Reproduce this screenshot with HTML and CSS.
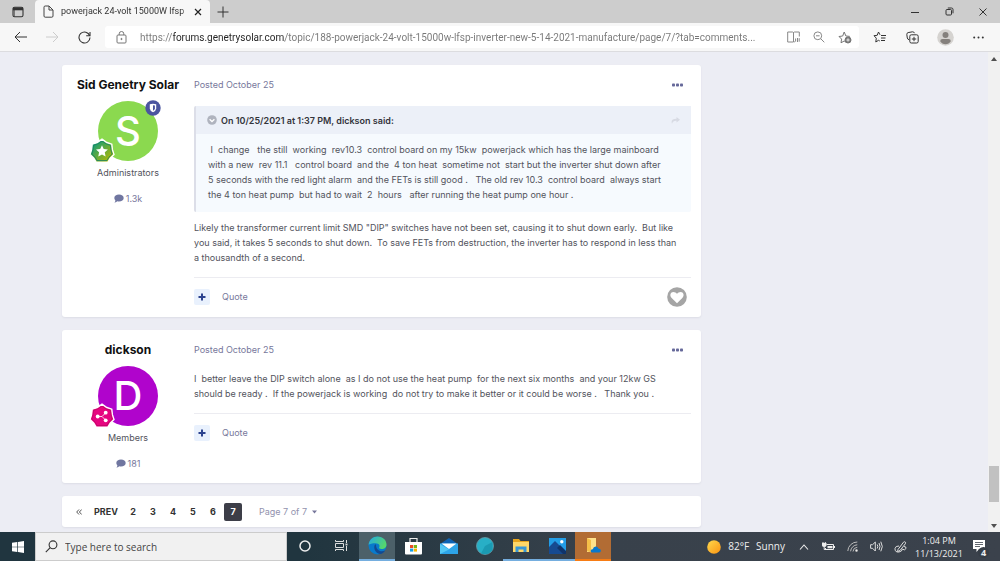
FILE: index.html
```html
<!DOCTYPE html>
<html lang="en">
<head>
<meta charset="utf-8">
<meta name="viewport" content="width=device-width, initial-scale=1">
<title>powerjack 24-volt 15000W lfsp inverter</title>
<link rel="stylesheet" href="styles.css">
</head>
<body>
<header class="browser">
  <div class="tabs">
    <button class="tab-menu" aria-label="Tab actions"><svg width="12" height="12" viewBox="0 0 12 12"><rect x="1" y="1.2" width="10" height="9.6" rx="1.6" fill="none" stroke="#333" stroke-width="1.1"/><path d="M1 1.5h10v2.8H1z" fill="#333"/><path d="M2.3 4v6.5" stroke="#333" stroke-width=".7"/></svg></button>
    <div class="tab">
      <svg width="11" height="13" viewBox="0 0 11 13" fill="none" stroke="#444" stroke-width="1"><path d="M1 2.2Q1 1 2.2 1H6l4 4v6q0 1.200-1.200 1.200H2.200Q1 12.200 1 11z"/><path d="M6 1v4h4"/></svg>
      <span class="tab-title">powerjack 24-volt 15000W lfsp i</span>
      <button aria-label="Close tab"><svg width="8" height="8" viewBox="0 0 8 8" stroke="#222" stroke-width="1.2"><path d="M1 1l6 6M7 1L1 7"/></svg></button>
    </div>
    <button class="new-tab" aria-label="New tab"><svg width="12" height="12" viewBox="0 0 12 12" stroke="#333"><path d="M6 .5v11M.5 6h11"/></svg></button>
    <div class="window-controls">
      <button aria-label="Minimize"><svg width="8" height="8" viewBox="0 0 8 8" stroke="#333"><path d="M0 4.500h8"/></svg></button>
      <button aria-label="Restore"><svg width="9" height="9" viewBox="0 0 9 9" fill="none" stroke="#333"><rect x="1" y="2.500" width="5.500" height="5.500" rx="1"/><path d="M2.800 1h3.700Q8 1 8 2.500v3.800"/></svg></button>
      <button aria-label="Close"><svg width="8" height="8" viewBox="0 0 8 8" stroke="#333"><path d="M.5.5l7 7M7.500.5l-7 7"/></svg></button>
    </div>
  </div>
  <div class="toolbar">
    <div class="nav">
      <button aria-label="Back"><svg width="13" height="12" viewBox="0 0 13 12" fill="none" stroke="#333"><path d="M6 1L1 6l5 5M1 6h12"/></svg></button>
      <button aria-label="Forward"><svg width="13" height="12" viewBox="0 0 13 12" fill="none" stroke="#ccc"><path d="M7 1l5 5-5 5M12 6H0"/></svg></button>
      <button aria-label="Refresh"><svg width="13" height="13" viewBox="0 0 13 13" fill="none" stroke="#333" stroke-width="1.1"><path d="M11.700 4.700A5.500 5.500 0 1 0 12 6.500"/><path d="M12 1v3.800H8.200"/></svg></button>
    </div>
    <div class="address">
      <svg width="11" height="13" viewBox="0 0 11 13" fill="none" stroke="#777"><rect x="1" y="4" width="9" height="8" rx="1"/><path d="M3.200 4V2.800a2.300 2.300 0 0 1 4.600 0V4"/><circle cx="5.500" cy="8" r=".6" fill="#777"/></svg>
      <input class="url" type="text" aria-label="Address" value="https://forums.genetrysolar.com/topic/188-powerjack-24-volt-15000w-lfsp-inverter-new-5-14-2021-manufacture/page/7/?tab=comments...">
      <button aria-label="Immersive reader"><svg width="13" height="12" viewBox="0 0 13 12" fill="none" stroke="#888"><path d="M6.500 11V1.200M6.500 11H.7V1h4.800l1 .7 1-.7h4.800v4.500M7.200 11l1-.5"/><path d="M8.600 7.500v3M10.500 7v4M12.200 7.200v3.500"/></svg></button>
      <button aria-label="Zoom"><svg width="12" height="12" viewBox="0 0 12 12" fill="none" stroke="#888"><circle cx="4.800" cy="4.800" r="3.900"/><path d="M3 4.800h3.600M7.700 7.700l3.600 3.600"/></svg></button>
      <button aria-label="Add to favorites"><svg width="14" height="13" viewBox="0 0 14 13" fill="none" stroke="#777"><path d="M7.500 11L6.200 10 3 11.800l.6-3.700L1 5.500l3.700-.5L6.200 1l1.700 4 3.900.4"/><circle cx="10" cy="9" r="3" fill="#777"/><path d="M8.300 9h3.400M10 7.300v3.400" stroke="#fff" stroke-width=".8"/></svg></button>
    </div>
    <div class="tools">
      <button aria-label="Favorites"><svg width="13" height="12" viewBox="0 0 13 12" fill="none" stroke="#333"><path d="M7 3.800L5.500 1 4.200 4.300 1 4.700l2.300 2.500L2.800 11 5.500 9.300l1.300.7M8 4.500h5M8 7h4.500M8 9.500h4"/></svg></button>
      <button aria-label="Collections"><svg width="13" height="13" viewBox="0 0 13 13" fill="none" stroke="#333"><path d="M3 8.700Q1.700 8.500 1.300 7L.8 3.500Q.7 2 2.100 1.600L6.500.8Q8 .7 8.500 2.200"/><rect x="3.800" y="3.800" width="8.400" height="8.200" rx="1.500"/><path d="M5.800 8h4.400M8 5.800v4.400"/></svg></button>
      <button aria-label="Profile"><svg width="17" height="17" viewBox="0 0 17 17"><circle cx="8.500" cy="8.500" r="8.300" fill="#d5d3d0"/><circle cx="8.500" cy="6" r="3" fill="#85817d"/><path d="M3.200 12.300Q3.200 10 5.500 10h6q2.300 0 2.300 2.300-1.900 3-5.300 3t-5.300-3z" fill="#85817d"/></svg></button>
      <button aria-label="Settings and more"><svg width="11" height="3" viewBox="0 0 11 3" fill="#333"><circle cx="1.200" cy="1.500" r="1"/><circle cx="5.500" cy="1.500" r="1"/><circle cx="9.800" cy="1.500" r="1"/></svg></button>
    </div>
  </div>
</header>

<div class="viewport">
  <main class="thread">
    <article class="card post">
      <aside class="author">
        <h3 class="name">Sid Genetry Solar</h3>
        <div class="avatar avatar-green">S
          <svg class="shield" width="16" height="16" viewBox="0 0 16 16"><circle cx="8" cy="8" r="7.700" fill="#4b559f"/><path d="M4.800 4.200L8 3.800l3.200.4v4.300Q11 11 8 12.200 5 11 4.800 8.500z" fill="#fff"/><path d="M8 5.200l1.900.2v3q-.1 1.500-1.900 2.300z" fill="#4b559f"/></svg>
          <svg class="rank" width="26" height="26" viewBox="0 0 26 26"><defs><linearGradient id="rank-a" x1="0" y1="0" x2="1" y2="1"><stop offset=".1" stop-color="#079b80"/><stop offset=".9" stop-color="#b6b900"/></linearGradient></defs><path d="M13 1.200l4.800 3.300 5 1.700.6 5.500 1.600 4.800-3.800 3.700-2.300 4-5.900.1-5.900-.1-2.300-4L1 16.500l1.600-4.800.6-5.500 5-1.700z" fill="url(#rank-a)" stroke="#fff" stroke-width="1.400"/><path d="M13 3.200l4.200 2.700 4.200 1.400.5 4.700 1.200 4-3.200 3.200-1.900 3.300-5 .1-5-.1-1.900-3.300L2.900 16l1.200-4 .5-4.700 4.200-1.400z" fill="none" stroke="#168164" stroke-width=".8"/><path d="M13 7.200l1.700 3.800 4.200.5-3.100 2.800.8 4.200-3.600-2.100-3.700 2.100.8-4.200L7 11.500l4.200-.5z" fill="#fff"/></svg>
        </div>
        <div class="group">Administrators</div>
        <div class="count"><svg width="10" height="9" viewBox="0 0 10 9"><path d="M5 .5c2.700 0 4.700 1.500 4.700 3.500S7.700 7.500 5 7.500q-.9 0-1.700-.2Q2 8.500.3 8.500 1.300 7.600 1.400 6.400.3 5.400.3 4C.3 2 2.300.5 5 .5z" fill="#7076a0"/></svg>1.3k</div>
      </aside>
      <section class="content">
        <div class="meta"><a href="#">Posted October 25</a><button aria-label="More options"><svg width="11" height="4" viewBox="0 0 11 4" fill="#66699a"><rect y=".5" width="3" height="3" rx=".8"/><rect x="4" y=".5" width="3" height="3" rx=".8"/><rect x="8" y=".5" width="3" height="3" rx=".8"/></svg></button></div>
        <blockquote class="quote">
          <div class="cite"><svg width="10" height="10" viewBox="0 0 10 10"><circle cx="5" cy="5" r="4.800" fill="#afb3be"/><path d="M2.600 4.200L5 6.500l2.400-2.300" fill="none" stroke="#fff" stroke-width="1.300"/></svg><span>On 10/25/2021 at 1:37 PM, dickson said:</span><svg width="9" height="7" viewBox="0 0 9 7"><path d="M5.500 0L9 2.800 5.500 5.600V3.800Q2 3.500 1 6.800-.8 1.900 5.500 1.800z" fill="#d7dae3"/></svg></div>
          <p class="text"> I  change   the still  working  rev10.3  control board on my 15kw  powerjack which has the large mainboard
with a new  rev 11.1   control board  and the  4 ton heat  sometime not  start but the inverter shut down after
5 seconds with the red light alarm  and the FETs is still good .   The old rev 10.3  control board  always start
the 4 ton heat pump  but had to wait  2  hours   after running the heat pump one hour .</p>
        </blockquote>
        <p class="text">Likely the transformer current limit SMD "DIP" switches have not been set, causing it to shut down early.  But like
you said, it takes 5 seconds to shut down.  To save FETs from destruction, the inverter has to respond in less than
a thousandth of a second.</p>
        <footer class="actions"><button class="multi" aria-label="Multiquote"><svg width="8" height="8" viewBox="0 0 8 8" stroke="#2c438f" stroke-width="2"><path d="M4 .5v7M.5 4h7"/></svg></button><button class="reply">Quote</button><button class="like" aria-label="Like"><svg width="20" height="20" viewBox="0 0 20 20"><circle cx="10" cy="10" r="9.800" fill="#a5a5a5"/><path d="M10 16.300L4.700 11C2.200 8.300 3.600 5 6.300 5Q8.800 5 10 6.800 11.200 5 13.700 5c2.700 0 4.100 3.300 1.600 6z" fill="#fff"/></svg></button></footer>
      </section>
    </article>

    <article class="card post">
      <aside class="author">
        <h3 class="name">dickson</h3>
        <div class="avatar avatar-purple">D
          <svg class="rank" width="26" height="26" viewBox="0 0 26 26"><path d="M13 1.200l4.800 3.300 5 1.700.6 5.500 1.600 4.800-3.800 3.700-2.300 4-5.900.1-5.900-.1-2.300-4L1 16.500l1.600-4.800.6-5.500 5-1.700z" fill="#e60580" stroke="#fff" stroke-width="1.400"/><path d="M13 3.200l4.200 2.700 4.200 1.400.5 4.700 1.200 4-3.200 3.200-1.900 3.300-5 .1-5-.1-1.900-3.300L2.900 16l1.200-4 .5-4.700 4.200-1.400z" fill="none" stroke="#bd0764" stroke-width=".8"/><path d="M9 13.500h4l3.500-3.500M13 13.500l3.500 3.500" fill="none" stroke="#fff" stroke-width=".8"/><g fill="#fff"><circle cx="8.700" cy="13.500" r="1.900"/><circle cx="16.700" cy="9.700" r="1.900"/><circle cx="16.700" cy="17.300" r="1.900"/></g></svg>
        </div>
        <div class="group">Members</div>
        <div class="count"><svg width="10" height="9" viewBox="0 0 10 9"><path d="M5 .5c2.700 0 4.700 1.500 4.700 3.500S7.700 7.500 5 7.500q-.9 0-1.700-.2Q2 8.500.3 8.500 1.300 7.600 1.400 6.400.3 5.400.3 4C.3 2 2.300.5 5 .5z" fill="#7076a0"/></svg>181</div>
      </aside>
      <section class="content">
        <div class="meta"><a href="#">Posted October 25</a><button aria-label="More options"><svg width="11" height="4" viewBox="0 0 11 4" fill="#66699a"><rect y=".5" width="3" height="3" rx=".8"/><rect x="4" y=".5" width="3" height="3" rx=".8"/><rect x="8" y=".5" width="3" height="3" rx=".8"/></svg></button></div>
        <p class="text">I  better leave the DIP switch alone  as I do not use the heat pump  for the next six months  and your 12kw GS
should be ready .  If the powerjack is working  do not try to make it better or it could be worse .   Thank you .</p>
        <footer class="actions"><button class="multi" aria-label="Multiquote"><svg width="8" height="8" viewBox="0 0 8 8" stroke="#2c438f" stroke-width="2"><path d="M4 .5v7M.5 4h7"/></svg></button><button class="reply">Quote</button></footer>
      </section>
    </article>

    <nav class="card pages" aria-label="Pagination">
      <a href="#" aria-label="First page"><svg width="6" height="6" viewBox="0 0 6 6" fill="none" stroke="#555"><path d="M3 .5L.7 3 3 5.500M5.700.5L3.400 3l2.300 2.500"/></svg></a>
      <a class="prev" href="#">PREV</a>
      <a href="#">2</a><a href="#">3</a><a href="#">4</a><a href="#">5</a><a href="#">6</a><a class="current" href="#" aria-current="page">7</a>
      <button class="jump">Page 7 of 7<svg width="5" height="4" viewBox="0 0 5 4"><path d="M0 .5h5L2.500 3.500z" fill="#77779b"/></svg></button>
    </nav>
  </main>
  <div class="scrollbar" aria-hidden="true">
    <svg width="6" height="4" viewBox="0 0 6 4"><path d="M0 4l3-4 3 4z" fill="#505050"/></svg>
    <span class="thumb"></span>
    <svg width="6" height="4" viewBox="0 0 6 4"><path d="M0 0l3 4 3-4z" fill="#505050"/></svg>
  </div>
</div>

<footer class="taskbar">
  <button class="start" aria-label="Start"><svg width="12" height="12" viewBox="0 0 12 12" fill="#fff"><path d="M0 1.800L5.300 1v4.700H0zM6 .9L12 0v5.700H6zM0 6.300h5.300V11L0 10.200zM6 6.300h6V12l-6-.9z"/></svg></button>
  <label class="search"><svg width="13" height="13" viewBox="0 0 13 13" fill="none" stroke="#333" stroke-width="1.100"><circle cx="8" cy="4.800" r="3.900"/><path d="M5.200 7.700L.8 12.200"/></svg><input type="text" aria-label="Search" placeholder="Type here to search"></label>
  <div class="apps">
    <button aria-label="Cortana"><svg width="14" height="14" viewBox="0 0 14 14"><circle cx="7" cy="7" r="5" fill="none" stroke="#eee" stroke-width="1.500"/></svg></button>
    <button aria-label="Task view"><svg width="13" height="13" viewBox="0 0 13 13" fill="none" stroke="#ddd"><path d="M.5 1v1.500h8V1M.5 12v-1.500h8V12M.5 4.500h8v4h-8zM11.500 1v3M11.500 7v5"/><path d="M10.500 5.500h2" stroke-width="1.800"/></svg></button>
    <button class="active" aria-label="Edge"><svg width="19" height="19" viewBox="0 0 19 19"><defs><linearGradient id="edge-a" x1="0" y1="0" x2="1" y2=".5"><stop stop-color="#23a9e5"/><stop offset="1" stop-color="#55d66c"/></linearGradient></defs><circle cx="9.500" cy="9.500" r="9" fill="#087acb"/><path d="M.6 8.800C1 3.800 5 .5 9.500.5c5.500 0 9 3.800 9 8 0 3-2.300 4.600-4.800 4.600-2 0-3.200-1-2.400-2 .6-.9.5-3.900-3.800-3.900-3 0-6.300.5-6.900 1.600z" fill="url(#edge-a)"/><path d="M7 8.500c-2 3.500.2 8.500 5 9.600 2.500-.5 4.300-2 5.200-3.700-4 2-9.200.5-9.200-5.900z" fill="#124a92"/></svg></button>
    <button aria-label="Store"><svg width="17" height="18" viewBox="0 0 17 18"><path d="M5 6V1.500h7V6" fill="none" stroke="#eee" stroke-width="1.200"/><path d="M0 5h17v11.500Q17 17.500 16 17.500H1Q0 17.500 0 16.500z" fill="#fff"/><path d="M5 8h3.200v3H5z" fill="#e94c25"/><path d="M8.800 8H12v3H8.800z" fill="#78b817"/><path d="M5 11.600h3.200v3H5z" fill="#149fe5"/><path d="M8.800 11.600H12v3H8.800z" fill="#f7b500"/></svg></button>
    <button aria-label="Mail"><svg width="18" height="16" viewBox="0 0 18 16"><path d="M0 6l9-6 9 6z" fill="#0f63b4"/><path d="M0 5.500h18V16H0z" fill="#2da4e8"/><path d="M1.500 5.500h15L9 11z" fill="#fff"/><path d="M0 6l9 5.500L0 16z" fill="#53c7f4"/></svg></button>
    <button aria-label="Browser"><svg width="18" height="18" viewBox="0 0 18 18"><circle cx="9" cy="9" r="8.500" fill="#28afc6" stroke="#6b98a4" stroke-width=".8"/><path d="M9 9l7.500-4v8Q12 19 5 16.500z" fill="#1b9ab2"/></svg></button>
    <button class="running" aria-label="File Explorer"><svg width="16" height="15" viewBox="0 0 16 15"><path d="M0 1h6l1.500 2H16v11H0z" fill="#e8a51d"/><path d="M0 4h16v10H0z" fill="#ffd869"/><path d="M2.500 14V8.500h11V14h-3v-2.500h-5V14z" fill="#3898d6"/></svg></button>
    <button class="running" aria-label="Photos"><svg width="17" height="16" viewBox="0 0 17 16"><path d="M0 0h17v16H0z" fill="#239de6"/><path d="M0 9l6-6 11 11v2H0z" fill="#164a91"/><path d="M8 10l3-3 6 6v3h-3z" fill="#10346b"/><circle cx="12.800" cy="3.800" r="1.700" fill="#fff"/></svg></button>
    <button class="alert" aria-label="OneDrive folder"><svg width="15" height="15" viewBox="0 0 15 15"><path d="M1 0h9v14H1z" fill="#ffe18b"/><path d="M1 0l4 2v12.500L1 13z" fill="#f5bf49"/><path d="M6 14.500q-2-.5-1.200-2.300.6-1.200 2-1 .5-2.700 3-2.700 2 0 2.600 2 2.600.2 2.500 2.200-.1 1.500-1.700 1.800z" fill="#0878cd"/></svg></button>
  </div>
  <div class="tray">
    <button class="weather"><svg width="14" height="14" viewBox="0 0 14 14"><defs><linearGradient id="sun-a" x1="0" y1="0" x2="1" y2="1"><stop stop-color="#ffd94d"/><stop offset="1" stop-color="#fb9412"/></linearGradient></defs><circle cx="7" cy="7" r="6.800" fill="url(#sun-a)"/></svg><span>82°F</span><span>Sunny</span></button>
    <button aria-label="Hidden icons"><svg width="10" height="6" viewBox="0 0 10 6" fill="none" stroke="#eee" stroke-width="1.100"><path d="M1 5.500l4-4.500 4 4.500"/></svg></button>
    <button aria-label="Battery"><svg width="13" height="9" viewBox="0 0 13 9"><path d="M4.500 2.500h7v5h-8V6" fill="none" stroke="#eee"/><path d="M5.500 4h5v2.200h-5zM12 4h1v2h-1zM0 1h4.500v2.500Q4 5 2.200 5 .3 5 0 3.500z" fill="#eee"/><path d="M1 0v1M3.300 0v1M2.200 5v2.500h2" fill="none" stroke="#eee"/></svg></button>
    <button aria-label="Network"><svg width="11" height="11" viewBox="0 0 11 11" fill="none" stroke="#bbb"><path d="M.8 10A9.500 9.500 0 0 1 10.300 1M3.600 10.300a7 7 0 0 1 6.700-6.500M6 10.500a4.500 4.500 0 0 1 4.300-4.200"/><circle cx="9.500" cy="9.500" r="1" fill="#eee"/></svg></button>
    <button aria-label="Volume"><svg width="13" height="11" viewBox="0 0 13 11" fill="none" stroke="#ddd"><path d="M.6 3.700h2L5.300 1v9L2.600 7.300h-2zM7.200 3.500q1.200 2 0 4M9 2q2 3.500 0 7M10.800.7q3 4.800 0 9.600"/></svg></button>
    <button aria-label="Pen"><svg width="13" height="12" viewBox="0 0 13 12" fill="none" stroke="#ddd"><path d="M4 8.500L9.500 1.200q1-1 2 .1.500.7-.2 1.500L6 9.500l-2.500 1zM5 5Q1.500 4.800 1 7.500.8 11.500 5 11q3-.5 3.500-3 2 2 3.500-.5.500-2-2-2"/></svg></button>
    <button class="clock"><time>1:04 PM</time><time>11/13/2021</time></button>
    <button class="notices" aria-label="Notifications"><svg width="13" height="13" viewBox="0 0 13 13"><path d="M0 0h12v9H6l-2.500 3V9H0z" fill="#fff"/><path d="M2 2.500h8M2 4.500h8M2 6.500h5" stroke="#3a414b" stroke-width=".8"/></svg><span class="badge">4</span></button>
  </div>
</footer>
</body>
</html>
```

FILE: styles.css
```css
* { box-sizing: border-box; }
body {
  margin: 0;
  height: 100vh;
  display: flex;
  flex-direction: column;
  overflow: hidden;
  background: #ecedf4;
  color: #52535c;
  font: 9px/15px Inter, sans-serif;
}
button, input { font: inherit; color: inherit; border: 0; padding: 0; background: none; min-width: 0; }
button { display: flex; align-items: center; justify-content: center; flex: none; }
a { color: inherit; text-decoration: none; }
svg { display: block; flex: none; }
h3, p, blockquote { margin: 0; }

.browser, .taskbar { flex: none; font-family: "Open Sans", "Noto Sans", sans-serif; }
.tabs { display: flex; height: 23px; background: #cdcdcd; }
.tab-menu { width: 35px; }
.tab { display: flex; align-items: center; gap: 7px; width: 175px; padding: 0 8px; background: #f7f7f7; border-radius: 4px 4px 0 0; }
.tab-title {
  flex: 1;
  overflow: hidden;
  white-space: nowrap;
  font-family: Roboto, sans-serif;
  color: #333;
  -webkit-mask-image: linear-gradient(90deg, #000 96%, transparent);
  mask-image: linear-gradient(90deg, #000 96%, transparent);
}
.new-tab { width: 26px; }
.window-controls { display: flex; margin-left: auto; }
.window-controls button { width: 34px; }
.toolbar { display: flex; align-items: center; height: 29px; background: #f7f7f7; border-bottom: 1px solid #dcdcdf; }
.nav { display: flex; padding: 0 5px 0 4px; }
.nav button { width: 32px; }
.address { flex: 1; display: flex; align-items: center; gap: 13px; height: 22px; padding: 0 7px 0 11px; background: #fff; border-radius: 3px; }
.url {
  flex: 1;
  height: 20px;
  font-family: Roboto, sans-serif;
  font-size: 10px;
  outline: 0;
  color: #777;
  background: linear-gradient(90deg, #777 33px, #222 33px, #222 145px, #777 145px);
  -webkit-background-clip: text;
  background-clip: text;
  -webkit-text-fill-color: transparent;
}
.tools { display: flex; padding: 0 5px 0 4px; }
.tools button { width: 33px; }

.viewport { flex: 1; min-height: 0; display: flex; }
.thread { flex: 1; display: flex; flex-direction: column; gap: 13px; padding: 13px 287px 0 62px; overflow: hidden; }
.card { flex: none; background: #fff; border-radius: 3px; box-shadow: 0 1px 2px #dcdde6; }
.post { display: grid; grid-template-columns: 132px 1fr; padding: 12px 10px 2px 0; }
.author { display: flex; flex-direction: column; align-items: center; padding-bottom: 10px; }
.name { font-size: 12px; font-weight: 700; color: #111; white-space: nowrap; }
.avatar {
  position: relative;
  width: 60px;
  height: 60px;
  margin: 9px 0 4px;
  border-radius: 50%;
  color: #fff;
  font-size: 40px;
  font-weight: 500;
  line-height: 60px;
  text-align: center;
}
.avatar-green { background: #8bd94f; }
.avatar-purple { background: #b004cc; }
.shield { position: absolute; top: -1px; right: -3px; }
.rank { position: absolute; left: -9px; bottom: -3px; }
.count { display: flex; align-items: center; gap: 2px; margin-top: 11px; color: #77779b; }

.meta { display: flex; justify-content: space-between; align-items: center; color: #77779b; }
.meta button { width: 27px; height: 15px; }
.meta + .text { padding-top: 14px; }
.text { white-space: pre-wrap; }
.quote { margin: 14px 0 8px; background: #f6fafe; border-left: 2px solid #dcdee8; border-radius: 2px; }
.cite { display: flex; align-items: center; gap: 4px; height: 28px; padding: 0 11px; background: #ecf0f8; font-weight: 600; color: #33343b; }
.cite span { flex: 1; }
.quote .text { padding: 8px 0 10px 12px; }
.actions { display: flex; align-items: center; gap: 12px; height: 38px; margin-top: 12px; border-top: 1px solid #ececf1; color: #77779b; }
.multi { width: 16px; height: 16px; background: #e9f1fd; border-radius: 2px; }
.like { margin-left: auto; margin-right: 4px; }

.pages { display: flex; align-items: center; height: 31px; padding: 0 8px; font-weight: 700; color: #333; }
.pages a { display: grid; place-items: center; width: 18px; height: 18px; margin-right: 2px; border-radius: 2px; }
.pages .prev { width: 32px; }
.pages .current { background: #3d3e48; color: #fff; }
.jump { gap: 5px; margin-left: 15px; font-weight: 400; color: #9292ae; }

.scrollbar { display: flex; flex-direction: column; align-items: center; width: 12px; padding: 5px 0 4px; background: #f1f1f1; }
.thumb { width: 10px; height: 36px; margin: auto 0 22px; background: #c1c1c1; }

.taskbar { display: flex; height: 29px; background: linear-gradient(90deg, #20353f 30%, #38414b 60%, #3b424c); color: #eee; }
.start { width: 35px; }
.search { display: flex; align-items: center; gap: 7px; width: 252px; padding: 0 9px; background: #f1f1f1; border: 1px solid #ccc; color: #333; }
.search input { flex: 1; height: 20px; font-size: 10px; outline: 0; }
.search input::placeholder { color: #444; opacity: 1; }
.apps { display: flex; }
.apps button { width: 36px; border-bottom: 2px solid transparent; }
.apps .active { background: #4c6069; border-color: #75aedf; }
.apps .running { border-color: #75aedf; }
.apps .alert { background: #b26c34; border-color: #f77c14; }
.tray { display: flex; margin-left: auto; padding-right: 8px; }
.tray button { width: 24px; }
.tray .weather { width: auto; gap: 7px; margin-right: 7px; font-size: 10px; }
.tray .clock { width: 54px; flex-direction: column; line-height: 13px; }
.tray .notices { position: relative; width: 26px; }
.badge { position: absolute; right: 3px; bottom: 3px; width: 11px; height: 11px; border-radius: 50%; background: #363d46; line-height: 11px; font-weight: 700; }
```
